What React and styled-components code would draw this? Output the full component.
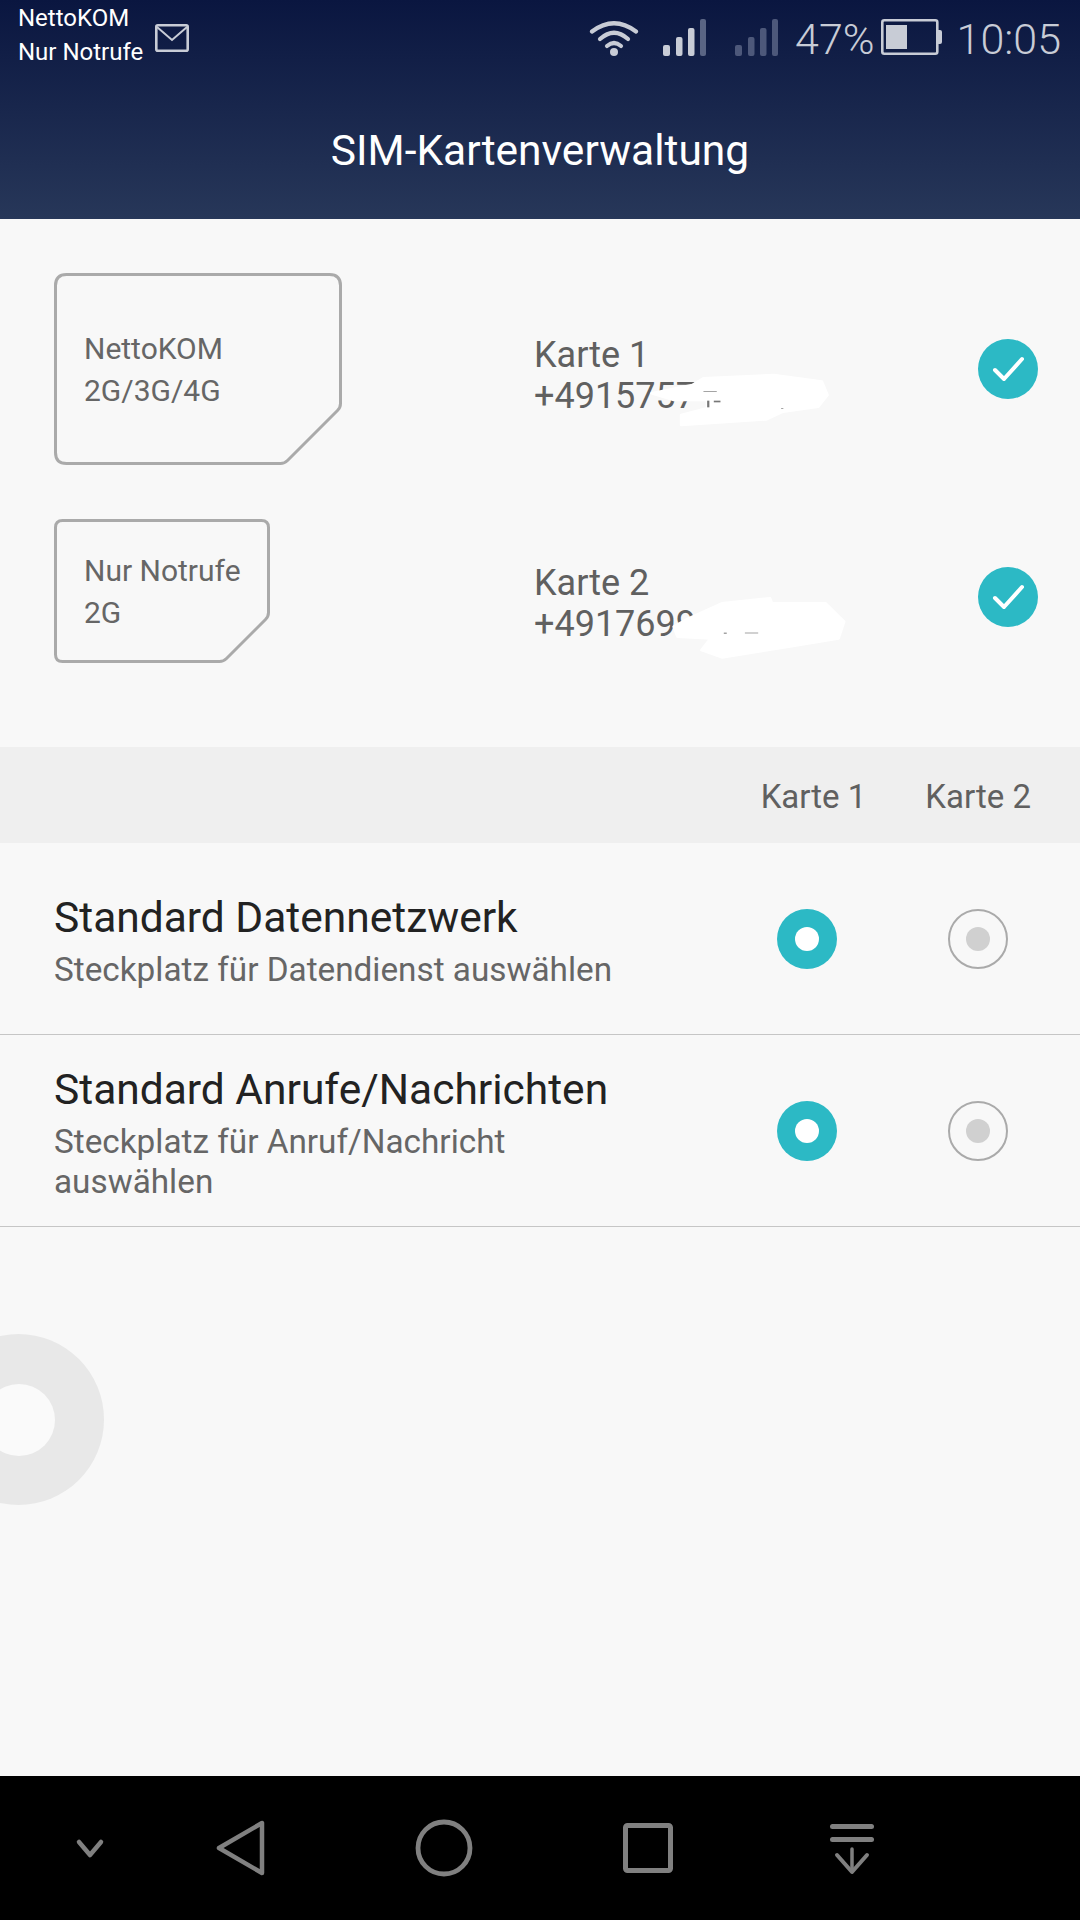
import React from "react";
import styled, { createGlobalStyle } from "styled-components";

const GlobalStyle = createGlobalStyle`
  html, body {
    margin: 0;
    padding: 0;
    background: #f8f8f8;
  }
  * {
    box-sizing: border-box;
  }
`;

function SimOutline({ w, h, r, cut }) {
  const W = w - 1.5;
  const H = h - 1.5;
  const d = `M${1.5 + r} 1.5 H${W - r} Q${W} 1.5 ${W} ${1.5 + r} V${H - cut - 4} Q${W} ${H - cut} ${W - 3} ${H - cut + 3} L${W - cut + 3} ${H - 3} Q${W - cut} ${H} ${W - cut - 4} ${H} H${1.5 + r} Q1.5 ${H} 1.5 ${H - r} V${1.5 + r} Q1.5 1.5 ${1.5 + r} 1.5Z`;
  return (
    <SimShape width={w} height={h} viewBox={`0 0 ${w} ${h}`}>
      <path d={d} fill="none" stroke="#aaaaaa" strokeWidth="3" />
    </SimShape>
  );
}

function SimEntry({ w, h, r, cut, rowHeight, name, network, card, phone }) {
  return (
    <SimRow $height={rowHeight}>
      <SimCard $w={w} $h={h}>
        <SimOutline w={w} h={h} r={r} cut={cut} />
        <SimLabel>{name}</SimLabel>
        <SimLabel>{network}</SimLabel>
      </SimCard>
      <SimInfo>
        <InfoLine>{card}</InfoLine>
        <InfoLine>{phone}</InfoLine>
      </SimInfo>
      <CheckBadge>
        <svg width="60" height="60" viewBox="0 0 60 60">
          <path d="M17 31 L26 40 L44 20" fill="none" stroke="#fff" strokeWidth="4" strokeLinecap="round" strokeLinejoin="round" />
        </svg>
      </CheckBadge>
    </SimRow>
  );
}

function SettingRow({ title, sub }) {
  return (
    <Row>
      <RowText>
        <RowTitle>{title}</RowTitle>
        <RowSub>{sub}</RowSub>
      </RowText>
      <RadioCell>
        <Radio $on />
      </RadioCell>
      <RadioCell>
        <Radio />
      </RadioCell>
    </Row>
  );
}

function SignalBars({ dim }) {
  const color = dim ? "#4d587a" : "#c8ccd6";
  const last = dim ? "#4d587a" : "#5a6584";
  return (
    <StatusIcon width="44" height="37" viewBox="0 0 44 37">
      <rect x="0" y="26" width="7" height="11" rx="2" fill={color} />
      <rect x="13" y="18" width="6.5" height="19" rx="2" fill={color} />
      <rect x="25" y="9" width="6.5" height="28" rx="2" fill={color} />
      <rect x="37" y="0" width="6" height="37" rx="2" fill={last} />
    </StatusIcon>
  );
}

export default function App() {
  return (
    <Screen>
      <GlobalStyle />
      <Header>
        <StatusBar>
          <StatusLeft>
            <Carriers>
              <span>NettoKOM</span>
              <span>Nur Notrufe</span>
            </Carriers>
            <MailIcon width="34" height="28" viewBox="0 0 34 28">
              <rect x="1.3" y="1.3" width="31.4" height="25.4" rx="1.5" fill="none" stroke="#c8ccd6" strokeWidth="2.6" />
              <path d="M2 3 L17 16 L32 3" fill="none" stroke="#c8ccd6" strokeWidth="2" />
            </MailIcon>
          </StatusLeft>
          <StatusRight>
            <WifiIcon width="50" height="37" viewBox="0 0 50 37">
              <g fill="none" stroke="#c8ccd6" strokeWidth="4.2" strokeLinecap="round">
                <path d="M3 12.5 Q25 -4 47 12.5" />
                <path d="M11 20 Q25 7.5 39 20" />
                <path d="M18 27 Q25 21 32 27" />
              </g>
              <circle cx="25" cy="33" r="4" fill="#c8ccd6" />
            </WifiIcon>
            <SignalBars />
            <SignalBars dim />
            <Percent>47%</Percent>
            <BatteryIcon width="61" height="36" viewBox="0 0 61 36">
              <rect x="1.3" y="1.3" width="55" height="33.4" rx="2" fill="none" stroke="#c8ccd6" strokeWidth="2.6" />
              <rect x="5" y="6" width="21" height="24" fill="#c8ccd6" />
              <path d="M57 11 h2 a2 2 0 0 1 2 2 v10 a2 2 0 0 1 -2 2 h-2z" fill="#c8ccd6" />
            </BatteryIcon>
            <Clock>10:05</Clock>
          </StatusRight>
        </StatusBar>
        <TitleBar>SIM-Kartenverwaltung</TitleBar>
      </Header>

      <Main>
        <SimSection>
          <SimEntry w={288} h={192} r={11} cut={56} rowHeight={192} name="NettoKOM" network="2G/3G/4G" card="Karte 1" phone="+4915757" />
          <SimEntry w={216} h={144} r={7} cut={45} rowHeight={156} name="Nur Notrufe" network="2G" card="Karte 2" phone="+4917699" />
        </SimSection>

        <CardBand>
          <BandLabel>Karte 1</BandLabel>
          <BandLabel>Karte 2</BandLabel>
        </CardBand>

        <SettingRow title="Standard Datennetzwerk" sub="Steckplatz für Datendienst auswählen" />
        <SettingRow title="Standard Anrufe/Nachrichten" sub="Steckplatz für Anruf/Nachricht auswählen" />

        {/* white scribbles hiding the phone numbers */}
        <Redactions viewBox="0 0 1568 1050" preserveAspectRatio="none">
          <g fill="#fff" stroke="#fff" strokeWidth="8" strokeLinejoin="round">
            <path d="M410 250 L520 225 L550 205 L740 195 L870 215 L885 255 L860 290 L765 305 L720 328 L490 345 L490 315 L560 295 L560 270 L470 270Z" />
            <path d="M470 950 L510 925 L600 880 L730 865 L735 880 L880 880 L930 935 L915 985 L780 1010 L600 1042 L545 1020 L570 985 L480 980Z" />
          </g>
          <g fill="#777">
            <rect x="560" y="272" width="6" height="20" />
            <rect x="578" y="272" width="18" height="5" />
            <rect x="550" y="243" width="36" height="2" />
            <rect x="760" y="294" width="6" height="2" />
            <rect x="605" y="968" width="8" height="3" />
            <rect x="662" y="968" width="36" height="2" />
          </g>
        </Redactions>

        <FloatingDock>
          <FloatingDockHole />
        </FloatingDock>
      </Main>

      <NavBar>
        <NavSlot $after={-54}>
          <svg width="60" height="60" viewBox="0 0 60 60">
            <path d="M19 24 L30 37 L41 24" fill="none" stroke="#808080" strokeWidth="4.5" strokeLinecap="round" strokeLinejoin="round" />
          </svg>
        </NavSlot>
        <NavSlot>
          <svg width="60" height="60" viewBox="0 0 60 60">
            <path d="M9 30 L52 5 L52 55Z" fill="none" stroke="#808080" strokeWidth="4.5" strokeLinejoin="round" />
          </svg>
        </NavSlot>
        <NavSlot>
          <svg width="60" height="60" viewBox="0 0 60 60">
            <circle cx="30" cy="30" r="26" fill="none" stroke="#808080" strokeWidth="4.8" />
          </svg>
        </NavSlot>
        <NavSlot>
          <svg width="60" height="60" viewBox="0 0 60 60">
            <rect x="7.5" y="7.5" width="45" height="45" rx="2" fill="none" stroke="#808080" strokeWidth="5" />
          </svg>
        </NavSlot>
        <NavSlot>
          <svg width="60" height="60" viewBox="0 0 60 60">
            <g fill="none" stroke="#808080" strokeLinecap="round">
              <path d="M10.5 8.5 H49.5" strokeWidth="5" />
              <path d="M10.5 21.5 H49.5" strokeWidth="5" />
              <path d="M30 31 V53" strokeWidth="3.5" />
              <path d="M15 37 L30 54 L45 37" strokeWidth="4" strokeLinejoin="round" />
            </g>
          </svg>
        </NavSlot>
      </NavBar>
    </Screen>
  );
}

const Screen = styled.div`
  width: 1080px;
  height: 1920px;
  display: flex;
  flex-direction: column;
  overflow: hidden;
  background: #f8f8f8;
  font-family: Roboto, "Noto Sans", sans-serif;
`;

const Header = styled.header`
  height: 219px;
  display: flex;
  flex-direction: column;
  background: linear-gradient(180deg, #0a1640 0%, #273759 100%);
`;

const StatusBar = styled.div`
  height: 78px;
  display: flex;
  justify-content: space-between;
  padding: 0 19px 0 18px;
`;

const StatusLeft = styled.div`
  display: flex;
  align-items: flex-start;
  gap: 12px;
`;

const Carriers = styled.div`
  display: flex;
  flex-direction: column;
  padding-top: 1px;
  color: #fff;
  font-size: 24px;
  line-height: 34px;
`;

const MailIcon = styled.svg`
  margin-top: 24px;
`;

const StatusRight = styled.div`
  display: flex;
  align-items: flex-start;
  padding-top: 19px;
`;

const StatusIcon = styled.svg`
  margin-left: 24px;
  &:nth-child(3) {
    margin-left: 28px;
  }
`;

const WifiIcon = styled.svg``;

const Percent = styled.span`
  margin-left: 16px;
  margin-top: -5px;
  color: #c8ccd6;
  font-size: 43px;
  font-weight: 300;
  line-height: 50px;
`;

const BatteryIcon = styled.svg`
  margin-left: 6px;
`;

const Clock = styled.span`
  margin-left: 15px;
  margin-top: -5px;
  color: #c8ccd6;
  font-size: 43px;
  font-weight: 300;
  line-height: 50px;
`;

const TitleBar = styled.div`
  flex: 1;
  display: flex;
  align-items: center;
  justify-content: center;
  padding-top: 3px;
  color: #fff;
  font-size: 42.5px;
`;

const Main = styled.main`
  flex: 1;
  position: relative;
  background: #f8f8f8;
`;

const SimSection = styled.section`
  display: flex;
  flex-direction: column;
  gap: 54px;
  padding: 54px 42px 72px 54px;
`;

const SimRow = styled.div`
  height: ${(p) => p.$height}px;
  display: grid;
  grid-template-columns: 480px 1fr 60px;
  align-items: center;
`;

const SimCard = styled.div`
  position: relative;
  align-self: start;
  width: ${(p) => p.$w}px;
  height: ${(p) => p.$h}px;
  display: flex;
  flex-direction: column;
  justify-content: center;
  padding: 2px 0 0 30px;
`;

const SimShape = styled.svg`
  position: absolute;
  left: 0;
  top: 0;
`;

const SimLabel = styled.div`
  position: relative;
  color: #666;
  font-size: 30px;
  line-height: 42px;
`;

const SimInfo = styled.div`
  padding-top: 13px;
`;

const InfoLine = styled.div`
  color: #606060;
  font-size: 36px;
  line-height: 41px;
`;

const CheckBadge = styled.div`
  width: 60px;
  height: 60px;
  border-radius: 50%;
  background: #2cb9c5;
`;

const CardBand = styled.div`
  height: 96px;
  display: flex;
  align-items: center;
  justify-content: flex-end;
  gap: 59px;
  padding: 3px 49px 0 0;
  background: #efefef;
`;

const BandLabel = styled.span`
  color: #606060;
  font-size: 33px;
`;

const Row = styled.div`
  height: 192px;
  display: grid;
  grid-template-columns: 1fr 171px 171px;
  align-items: center;
  padding: 0 17px 0 54px;
  border-bottom: 1px solid #c6c6c6;
`;

const RowText = styled.div`
  max-width: 575px;
`;

const RowTitle = styled.div`
  color: #222;
  font-size: 42.5px;
  line-height: 62px;
`;

const RowSub = styled.div`
  margin-top: 1px;
  color: #666;
  font-size: 33.3px;
  line-height: 40px;
`;

const RadioCell = styled.div`
  display: flex;
  justify-content: center;
`;

const Radio = styled.div`
  width: 60px;
  height: 60px;
  display: flex;
  align-items: center;
  justify-content: center;
  border-radius: 50%;
  background: ${(p) => (p.$on ? "#2cb9c5" : "transparent")};
  border: ${(p) => (p.$on ? "none" : "2px solid #aaaaaa")};
  &::after {
    content: "";
    width: 24px;
    height: 24px;
    border-radius: 50%;
    background: ${(p) => (p.$on ? "#ffffff" : "#d0d0d0")};
  }
`;

const Redactions = styled.svg`
  position: absolute;
  left: 500px;
  top: 91px;
  width: 580px;
  height: 350px;
`;

const FloatingDock = styled.div`
  position: absolute;
  left: -67px;
  top: 1115px;
  width: 171px;
  height: 171px;
  display: flex;
  align-items: center;
  justify-content: center;
  border-radius: 50%;
  background: #e8e8e8;
`;

const FloatingDockHole = styled.div`
  width: 72px;
  height: 72px;
  border-radius: 50%;
  background: #fafafa;
`;

const NavBar = styled.nav`
  height: 144px;
  display: flex;
  align-items: center;
  gap: 144px;
  padding-left: 60px;
  background: #000;
`;

const NavSlot = styled.div`
  width: 60px;
  height: 60px;
  margin-right: ${(p) => p.$after || 0}px;
`;
